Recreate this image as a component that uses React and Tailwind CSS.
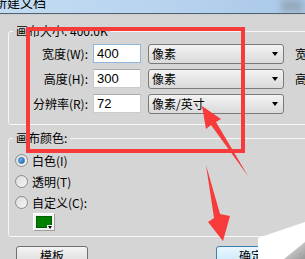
import React from 'react';

const cjk = "font-['Noto_Sans_CJK_SC',sans-serif]";

const SizeRow = ({ label, value, unit, side, focused }) => (
  <div className="flex items-center h-[19px]">
    <span className={`w-[84px] pr-[5px] text-right text-[12px] leading-none text-black ${cjk}`}>{label}</span>
    <div
      className={`w-[48px] h-[19px] bg-white border flex items-center pl-[3px] text-[13px] leading-none text-black font-['Liberation_Sans',sans-serif] ${
        focused ? 'border-[#8fb7dc]' : 'border-[#c8cbcf] border-t-[#a9acb1]'
      }`}
    >
      {value}
    </div>
    <div className="ml-[7px] w-[136px] h-[20px] rounded-[3px] border border-[#7a7a7a] bg-gradient-to-b from-[#f3f3f3] to-[#dadada] flex items-center pl-[3px] pr-[5px]">
      <span className={`text-[12px] leading-none text-black ${cjk}`}>{unit}</span>
      <span className="ml-auto w-0 h-0 border-l-[3.5px] border-r-[3.5px] border-t-[4px] border-l-transparent border-r-transparent border-t-black" />
    </div>
    <span className={`ml-[11px] text-[12px] leading-none text-black ${cjk}`}>{side}</span>
  </div>
);

const Radio = ({ label, checked }) => (
  <div className="flex items-center h-[21px] pl-[6px]">
    <span className="w-[13px] h-[13px] rounded-full border border-[#8b8c8e] bg-gradient-to-br from-[#dcdcdc] to-[#f6f6f6] flex items-center justify-center">
      {checked && (
        <span className="w-[7px] h-[7px] rounded-full bg-gradient-to-br from-[#7fc4f4] to-[#1b68b8] border border-[#2a6db0]" />
      )}
    </span>
    <span className={`ml-[4px] text-[12px] leading-none text-black ${cjk}`}>{label}</span>
  </div>
);

export default function App() {
  return (
    <div className="relative w-[305px] h-[259px] overflow-hidden bg-[#d5d5d5]">
      {/* title bar */}
      <div className="h-[13px] bg-gradient-to-r from-[#c3dcf2] via-[#b8d4ef] to-[#a9c8e8] flex overflow-hidden">
        <span className={`-ml-[6px] -mt-[5px] text-[13px] leading-none text-black ${cjk}`}>新建文档</span>
        <span className="ml-auto mr-[2px] w-[22px] h-[12px] bg-[#8d9cab] blur-[3px] opacity-70" />
      </div>
      <div className="h-[1px] bg-[#56616c]" />
      <div className="h-[1px] bg-[#c9ced3]" />

      <div className="pl-[8px]">
        {/* canvas size */}
        <fieldset className="mt-[9px] w-[310px] border border-[#f7f7f7] rounded-[3px] pt-[6px] pb-[11px]">
          <legend className={`ml-[4px] px-[3px] h-[14px] text-[12px] leading-[14px] text-black ${cjk}`}>
            画布大小: 400.0K
          </legend>
          <div className="flex flex-col gap-[6px]">
            <SizeRow label="宽度(W):" value="400" unit="像素" side="宽" focused />
            <SizeRow label="高度(H):" value="300" unit="像素" side="高" />
            <SizeRow label="分辨率(R):" value="72" unit="像素/英寸" side="" />
          </div>
        </fieldset>

        {/* canvas colour */}
        <fieldset className="mt-[6px] w-[310px] border border-[#f7f7f7] rounded-[3px] pt-[5px] pb-[5px]">
          <legend className={`ml-[4px] px-[3px] h-[14px] text-[12px] leading-[14px] text-black ${cjk}`}>
            画布颜色:
          </legend>
          <Radio label="白色(I)" checked />
          <Radio label="透明(T)" />
          <Radio label="自定义(C):" />
          <div className="ml-[24px] relative w-[22px] h-[18px] bg-[#f4f4f4] border border-[#a0a0a0] border-t-white border-l-white p-[2px]">
            <div className="w-full h-full bg-[#008000] border border-[#005a00]" />
            <span className="absolute right-[1px] bottom-[1px] w-[6px] h-[4px] bg-[#f4f4f4] flex items-center justify-center">
              <span className="w-0 h-0 border-l-[2.5px] border-r-[2.5px] border-t-[3px] border-l-transparent border-r-transparent border-t-black" />
            </span>
          </div>
        </fieldset>

        {/* buttons */}
        <div className="mt-[9px] pl-[8px] flex">
          <button className="w-[72px] h-[23px] rounded-[3px] border border-[#707070] bg-gradient-to-b from-[#f3f3f3] to-[#d6d6d6] flex justify-center pt-[3px]">
            <span className={`text-[12px] leading-none text-black ${cjk}`}>模板</span>
          </button>
          <button className="ml-[128px] w-[70px] h-[23px] rounded-[3px] border border-[#3c7fb1] bg-gradient-to-b from-[#eaf6fd] to-[#bee6fd] flex justify-center pt-[3px]">
            <span className={`text-[12px] leading-none text-black ${cjk}`}>确定</span>
          </button>
        </div>
      </div>

      {/* red annotations and paper overlay */}
      <svg className="absolute inset-0 pointer-events-none" width="305" height="259" viewBox="0 0 305 259">
        <rect x="28" y="29" width="215" height="122" fill="none" stroke="#f73b3b" strokeWidth="4" />
        <polygon points="202,106 221,119 216,122 248,176 211,125 206,129" fill="#f73b3b" />
        <polygon points="206,165 220,214 230,216 223,241 208,222 214,218" fill="#f73b3b" />
        <polygon points="258,238 305,222 305,259 258,259" fill="#ffffff" />
        <defs>
          <linearGradient id="shade" x1="0" y1="0" x2="1" y2="1">
            <stop offset="0" stopColor="#e8e8e8" />
            <stop offset="1" stopColor="#9a9a9a" />
          </linearGradient>
        </defs>
        <polygon points="284,259 305,242 305,259" fill="url(#shade)" />
      </svg>
    </div>
  );
}
